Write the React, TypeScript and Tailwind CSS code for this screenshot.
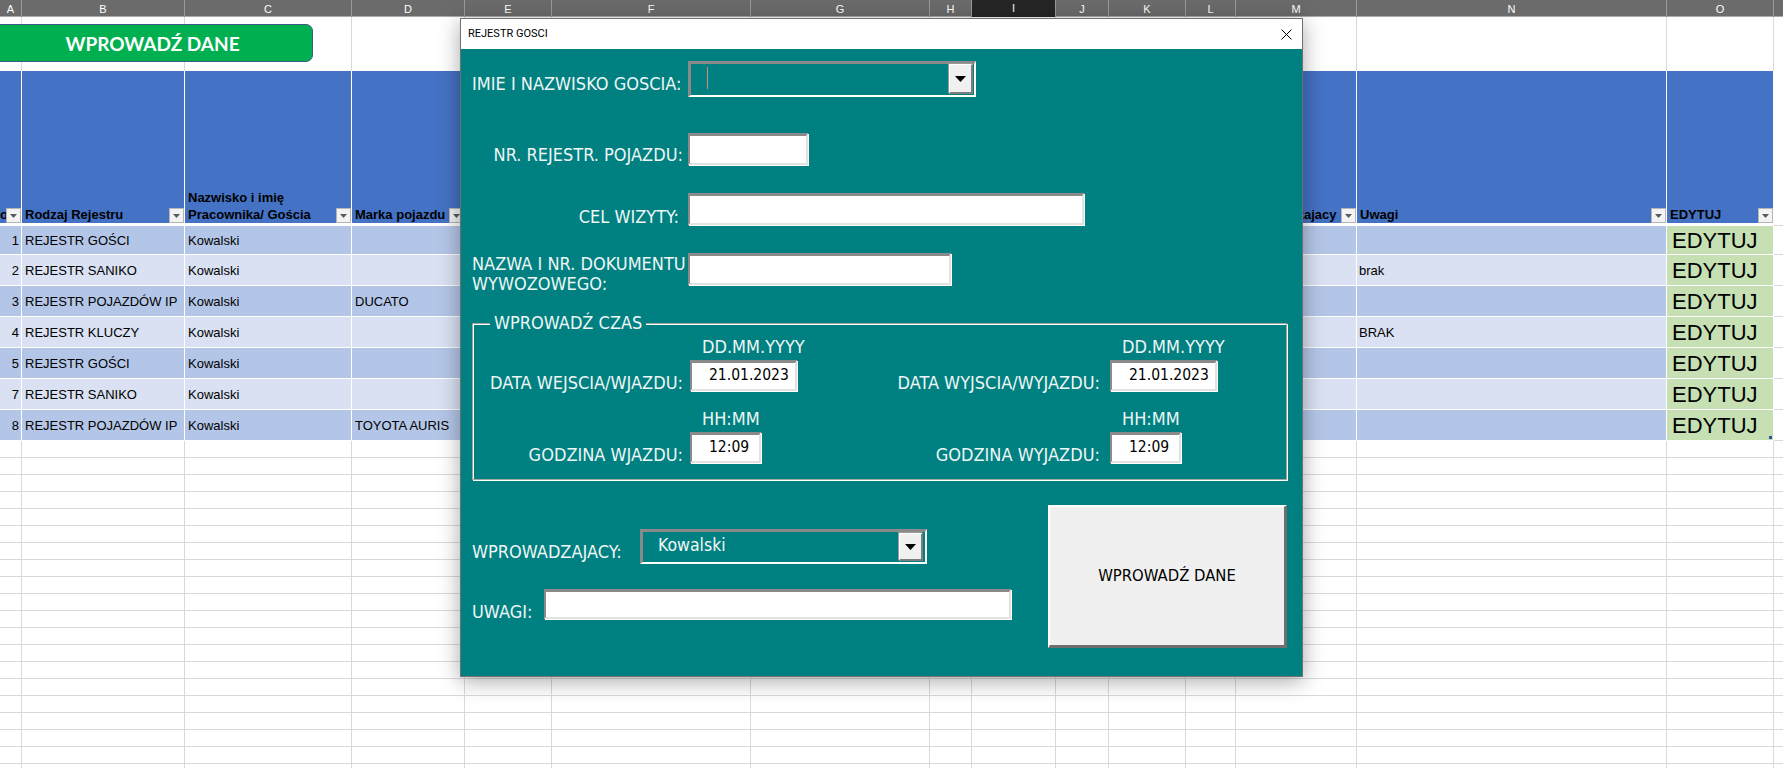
import React from 'react';

const GRID =
  'grid grid-cols-[22px_163px_167px_113px_87px_199px_179px_42px_84px_53px_77px_50px_121px_310px_107px_60px]';

const COLS = ['A', 'B', 'C', 'D', 'E', 'F', 'G', 'H', 'I', 'J', 'K', 'L', 'M', 'N', 'O', 'P'];

const HEAD = [
  'o',
  'Rodzaj Rejestru',
  'Nazwisko i imię\nPracownika/ Gościa',
  'Marka pojazdu',
  'Model',
  'Nr rejestracyjny',
  'Cel wizyty',
  'Data',
  'Godzina wejścia',
  'Data',
  'Godzina',
  'Dok.',
  'Wprowadzajacy',
  'Uwagi',
  'EDYTUJ',
];

const ROWS = [
  { n: '1', b: 'REJESTR GOŚCI', d: '', note: '' },
  { n: '2', b: 'REJESTR SANIKO', d: '', note: 'brak' },
  { n: '3', b: 'REJESTR POJAZDÓW IP', d: 'DUCATO', note: '' },
  { n: '4', b: 'REJESTR KLUCZY', d: '', note: 'BRAK' },
  { n: '5', b: 'REJESTR GOŚCI', d: '', note: '' },
  { n: '7', b: 'REJESTR SANIKO', d: '', note: '' },
  { n: '8', b: 'REJESTR POJAZDÓW IP', d: 'TOYOTA AURIS', note: '' },
];

const EMPTY_ROWS = Array.from({ length: 20 }, (_, i) => i);

const LBL =
  "font-['DejaVu_Sans_Condensed','Liberation_Sans',sans-serif] text-[18px] leading-[20px] text-[#eef6f6] whitespace-nowrap";

const VAL =
  "font-['DejaVu_Sans_Condensed','Liberation_Sans',sans-serif] text-[15.5px] text-black";

const INPUT =
  'bg-white border-t-[3px] border-l-2 border-b-2 border-r-2 border-t-[#8a8a8a] border-l-[#8a8a8a] border-b-[#e2e2e2] border-r-[#e2e2e2] shadow-[1px_1px_0_#ffffff]';

const COMBO =
  'border-t-[3px] border-l-[3px] border-b-2 border-r-2 border-t-[#8a8a8a] border-l-[#8a8a8a] border-b-white border-r-white';

function Filter() {
  return (
    <div className="shrink-0 w-[15px] h-[15px] bg-[#f3f3f3] border border-[#b5b5b5] flex items-center justify-center">
      <svg width="7" height="4" viewBox="0 0 7 4">
        <path d="M0 0H7L3.5 4Z" fill="#5a5a5a" />
      </svg>
    </div>
  );
}

function DropBtn({ h }: { h: string }) {
  return (
    <div
      className={`w-[24px] ${h} bg-[#f0f0f0] border-t border-l border-t-white border-l-white border-b-2 border-r-2 border-b-[#7d7d7d] border-r-[#7d7d7d] shadow-[-1px_-1px_0_#9a9a9a] flex items-center justify-center`}
    >
      <svg width="11" height="6" viewBox="0 0 11 6">
        <path d="M0 0H11L5.5 6Z" fill="#000" />
      </svg>
    </div>
  );
}

function Sheet() {
  return (
    <div className="flex flex-col font-['Liberation_Sans',Arial,sans-serif]">
      {/* column letters */}
      <div className={`${GRID} h-[17px] bg-[#6b6b6b] border-b border-[#a9a9a9]`}>
        {COLS.map((c) =>
          c === 'I' ? (
            <div
              key={c}
              className="flex items-center justify-center text-[11px] text-white bg-[#262626] border-r border-[#9a9a9a] border-b-2 border-b-[#2e7d4f]"
            >
              {c}
            </div>
          ) : (
            <div
              key={c}
              className="flex items-center justify-center text-[11px] text-white border-r border-[#9a9a9a]"
            >
              {c}
            </div>
          )
        )}
      </div>

      {/* row 1 */}
      <div className={`${GRID} h-[54px]`}>
        {COLS.map((c) => (
          <div key={c} className="bg-white border-r border-[#d9d9d9]" />
        ))}
      </div>

      {/* header row */}
      <div className={`${GRID} h-[155px]`}>
        {COLS.map((c, j) =>
          c === 'P' ? (
            <div key={c} className="bg-white border-r border-b border-[#d9d9d9]" />
          ) : (
            <div
              key={c}
              className="bg-[#4472c4] border-r border-r-white border-b-[3px] border-b-white flex items-end overflow-hidden"
            >
              <div
                className={`flex-1 min-w-0 overflow-hidden whitespace-pre text-[13px] font-bold leading-[17px] text-black ${
                  j === 0 ? 'pl-0' : 'pl-[3px]'
                }`}
              >
                {HEAD[j]}
              </div>
              <Filter />
            </div>
          )
        )}
      </div>

      {/* data rows */}
      {ROWS.map((r, i) => {
        const bg = i % 2 === 0 ? 'bg-[#b4c6e7]' : 'bg-[#d9e1f2]';
        const h = i === 0 ? 'h-[29px]' : 'h-[31px]';
        return (
          <div key={i} className={`${GRID} ${h}`}>
            {COLS.map((c) => {
              if (c === 'P')
                return <div key={c} className="bg-white border-r border-b border-[#d9d9d9]" />;
              if (c === 'O')
                return (
                  <div
                    key={c}
                    className="relative bg-[#c6e0b4] border-r border-b border-white flex items-center pl-[5px] pt-[2px] text-[22px] leading-none text-black"
                  >
                    EDYTUJ
                    {i === ROWS.length - 1 && (
                      <span className="absolute right-[1px] bottom-[1px] w-[3px] h-[3px] bg-[#2f5597]" />
                    )}
                  </div>
                );
              let text = '';
              let cls = 'pl-[3px]';
              if (c === 'A') {
                text = r.n;
                cls = 'justify-end pr-[2px]';
              } else if (c === 'B') text = r.b;
              else if (c === 'C') text = 'Kowalski';
              else if (c === 'D') text = r.d;
              else if (c === 'N') {
                text = r.note;
                cls = 'pl-[2px]';
              }
              return (
                <div
                  key={c}
                  className={`${bg} border-r border-b border-white flex items-center pt-[2px] whitespace-nowrap overflow-hidden text-[13px] text-black ${cls}`}
                >
                  {text}
                </div>
              );
            })}
          </div>
        );
      })}

      {/* empty rows */}
      {EMPTY_ROWS.map((i) => (
        <div key={i} className={`${GRID} h-[17px]`}>
          {COLS.map((c) => (
            <div key={c} className="bg-white border-r border-b border-[#d9d9d9]" />
          ))}
        </div>
      ))}
    </div>
  );
}

function GreenButton() {
  return (
    <div className="absolute left-[-8px] top-[24px] w-[321px] h-[38px] rounded-[7px] bg-[#00b050] border border-[#3b5b86] flex items-center justify-center">
      <span className="font-['Lato',sans-serif] font-bold text-[19px] leading-none text-white">
        WPROWADŹ DANE
      </span>
    </div>
  );
}

function Dialog() {
  return (
    <div className="absolute left-[460px] top-[18px] w-[843px] h-[659px] border border-[#707070] shadow-[0_4px_20px_rgba(0,0,0,0.35)] flex flex-col">
      {/* title bar */}
      <div className="h-[30px] shrink-0 bg-white flex items-center justify-between pl-[7px] pr-[10px]">
        <span className="font-['Roboto',sans-serif] text-[11px] text-black">REJESTR GOSCI</span>
        <svg width="11" height="11" viewBox="0 0 11 11">
          <path d="M0.5 0.5L10.5 10.5M10.5 0.5L0.5 10.5" stroke="#000" strokeWidth="1" />
        </svg>
      </div>

      {/* body */}
      <div className="flex-1 bg-[#008080] pl-[11px] pt-[12px] flex flex-col">
        {/* IMIE */}
        <div className="flex items-end">
          <div className={`${LBL} w-[216px] mb-[3px]`}>IMIE I NAZWISKO GOSCIA:</div>
          <div className={`${COMBO} w-[288px] h-[36px] flex items-start pl-[16px]`}>
            <div className="mt-[3px] w-px h-[22px] bg-[#d98a6c]" />
            <div className="ml-auto mr-[1px]">
              <DropBtn h="h-[30px]" />
            </div>
          </div>
        </div>

        {/* NR REJESTR */}
        <div className="flex items-end mt-[36px]">
          <div className={`${LBL} w-[216px] text-right pr-[5px]`}>NR. REJESTR. POJAZDU:</div>
          <div className={`${INPUT} w-[120px] h-[32px]`} />
        </div>

        {/* CEL WIZYTY */}
        <div className="flex items-end mt-[28px]">
          <div className={`${LBL} w-[216px] text-right pr-[9px] translate-y-[2px]`}>CEL WIZYTY:</div>
          <div className={`${INPUT} w-[396px] h-[32px]`} />
        </div>

        {/* NAZWA */}
        <div className="flex items-start mt-[28px]">
          <div className={`${LBL} w-[216px] pt-[1px]`}>
            NAZWA I NR. DOKUMENTU
            <br />
            WYWOZOWEGO:
          </div>
          <div className={`${INPUT} w-[263px] h-[32px]`} />
        </div>

        {/* FRAME */}
        <div className="relative mt-[29px] w-[815px] h-[157px] border border-[#a3a3a3] shadow-[inset_1px_1px_0_#ffffff,1px_1px_0_#ffffff] pt-[13px]">
          <div className={`${LBL} absolute left-[17px] top-[-11px] bg-[#008080] px-[4px]`}>WPROWADŹ CZAS</div>
          <div className="grid grid-cols-[217px_109px_311px_1fr]">
            {/* hint row */}
            <div />
            <div className={`${LBL} pl-[12px]`}>DD.MM.YYYY</div>
            <div />
            <div className={`${LBL} pl-[12px]`}>DD.MM.YYYY</div>

            {/* date row */}
            <div className={`${LBL} self-end text-right pr-[7px] translate-y-[2px]`}>DATA WEJSCIA/WJAZDU:</div>
            <div className={`${INPUT} ${VAL} mt-[3px] w-[107px] h-[31px] flex items-center pl-[17px]`}>
              21.01.2023
            </div>
            <div className={`${LBL} self-end text-right pr-[10px] translate-y-[2px]`}>DATA WYJSCIA/WYJAZDU:</div>
            <div className={`${INPUT} ${VAL} mt-[3px] w-[107px] h-[31px] flex items-center pl-[17px]`}>
              21.01.2023
            </div>

            {/* hint row 2 */}
            <div />
            <div className={`${LBL} pl-[12px] mt-[18px]`}>HH:MM</div>
            <div />
            <div className={`${LBL} pl-[12px] mt-[18px]`}>HH:MM</div>

            {/* time row */}
            <div className={`${LBL} self-end text-right pr-[7px] translate-y-[2px]`}>GODZINA WJAZDU:</div>
            <div className={`${INPUT} ${VAL} mt-[3px] w-[71px] h-[31px] flex items-center pl-[17px]`}>
              12:09
            </div>
            <div className={`${LBL} self-end text-right pr-[10px] translate-y-[2px]`}>GODZINA WYJAZDU:</div>
            <div className={`${INPUT} ${VAL} mt-[3px] w-[71px] h-[31px] flex items-center pl-[17px]`}>
              12:09
            </div>
          </div>
        </div>

        {/* bottom section */}
        <div className="flex mt-[25px]">
          <div className="w-[576px] pt-[24px] flex flex-col">
            <div className="flex items-end">
              <div className={`${LBL} w-[168px] mb-[2px]`}>WPROWADZAJACY:</div>
              <div className={`${COMBO} w-[287px] h-[35px] flex items-center pl-[15px]`}>
                <span className="font-['DejaVu_Sans_Condensed','Liberation_Sans',sans-serif] text-[17.5px] leading-[20px] text-[#f4f8f8] -translate-y-[2px]">
                  Kowalski
                </span>
                <div className="ml-auto mr-[2px]">
                  <DropBtn h="h-[28px]" />
                </div>
              </div>
            </div>
            <div className="flex items-end mt-[25px]">
              <div className={`${LBL} w-[72px] translate-y-[3px]`}>UWAGI:</div>
              <div className={`${INPUT} w-[467px] h-[30px]`} />
            </div>
          </div>
          <div className="w-[239px] h-[143px] bg-[#f0f0f0] border-t-2 border-l-2 border-t-white border-l-white border-b-[3px] border-r-[3px] border-b-[#6e6e6e] border-r-[#6e6e6e] flex items-center justify-center">
            <span className="font-['DejaVu_Sans_Condensed','Liberation_Sans',sans-serif] text-[16.5px] text-black">
              WPROWADŹ DANE
            </span>
          </div>
        </div>
      </div>
    </div>
  );
}

export default function App() {
  return (
    <div className="relative w-[1783px] h-[768px] overflow-hidden bg-white">
      <Sheet />
      <GreenButton />
      <Dialog />
    </div>
  );
}
